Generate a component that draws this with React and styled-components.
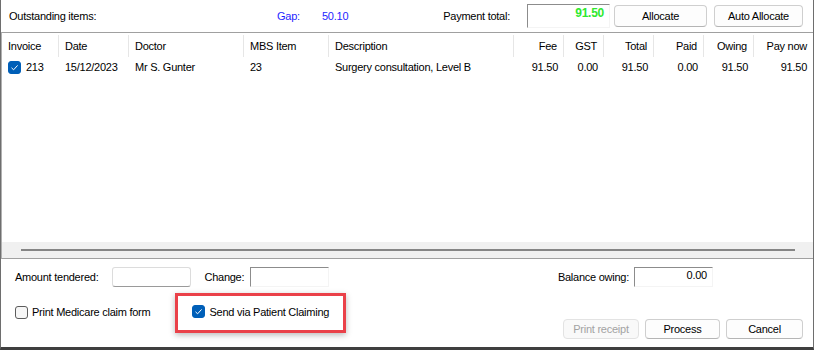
import React from "react";
import styled, { createGlobalStyle } from "styled-components";

const Global = createGlobalStyle`
  html, body { margin: 0; padding: 0; background: #ffffff; }
  body {
    font-family: "Liberation Sans", Arial, sans-serif;
    font-size: 11px;
    letter-spacing: -0.25px;
    color: #000;
  }
  * { box-sizing: border-box; }
`;

const Window = styled.div`
  width: 814px;
  height: 350px;
  border-left: 1px solid #6e6e6e;
  border-right: 1px solid #6e6e6e;
  border-bottom: 3px solid #3f3f3f;
  display: flex;
  flex-direction: column;
  background: #fff;
`;

const TopBar = styled.div`
  height: 32px;
  display: flex;
  align-items: center;
  padding-left: 8px;
  padding-right: 10px;
`;

const Slot = styled.div`
  width: ${(p) => p.$w}px;
  flex: none;
  color: ${(p) => p.$color || "#000"};
  text-align: ${(p) => p.$align || "left"};
  font-weight: ${(p) => (p.$bold ? 700 : 400)};
`;

const Field = styled.div`
  width: ${(p) => p.$w}px;
  height: ${(p) => p.$h || 20}px;
  flex: none;
  border-top: 1px solid #8c8c8c;
  border-left: 1px solid #8c8c8c;
  border-right: 1px solid #f4f4f4;
  border-bottom: 1px solid #f4f4f4;
  text-align: right;
  padding: 1px 5px 0 0;
  color: ${(p) => p.$color || "#000"};
  font-weight: ${(p) => (p.$bold ? 700 : 400)};
  font-size: ${(p) => p.$size || 11}px;
  align-self: ${(p) => p.$self || "auto"};
`;

const Input = styled.div`
  width: 79px;
  height: 20px;
  flex: none;
  border: 1px solid #dcdcdc;
  border-bottom-color: #9a9a9a;
  border-radius: 3px;
  background: #fff;
`;

const Button = styled.button`
  width: ${(p) => p.$w}px;
  height: ${(p) => p.$h || 20}px;
  flex: none;
  font-family: inherit;
  font-size: 11px;
  letter-spacing: -0.25px;
  color: ${(p) => (p.disabled ? "#a3a3a3" : "#000")};
  background: ${(p) => (p.disabled ? "#f9f9f9" : "#fdfdfd")};
  border: 1px solid ${(p) => (p.disabled ? "#e3e3e3" : "#cfcfcf")};
  border-bottom-color: ${(p) => (p.disabled ? "#e3e3e3" : "#b5b5b5")};
  border-radius: 4px;
  padding: 0;
  margin-left: ${(p) => p.$ml || 0}px;
`;

const Grid = styled.div`
  height: 227px;
  border-top: 1px solid #a0a0a0;
  border-bottom: 1px solid #a0a0a0;
  border-left: 1px solid #b0b0b0;
  display: flex;
  flex-direction: column;
`;

const Columns = "57px 70px 115px 85px 185px 50px 40px 50px 50px 50px 1fr";

const HeaderRow = styled.div`
  display: grid;
  grid-template-columns: ${Columns};
  height: 24px;
  padding-top: 2px;
`;

const HeaderCell = styled.div`
  display: flex;
  align-items: center;
  justify-content: ${(p) => (p.$right ? "flex-end" : "flex-start")};
  padding: 0 6px;
  border-right: ${(p) => (p.$last ? "none" : "1px solid #e6e6e6")};
`;

const DataRow = styled.div`
  display: grid;
  grid-template-columns: ${Columns};
  height: 20px;
`;

const Cell = styled.div`
  display: flex;
  align-items: center;
  gap: 5px;
  justify-content: ${(p) => (p.$right ? "flex-end" : "flex-start")};
  padding: ${(p) => (p.$right ? "0 6px 0 0" : "0 0 0 6px")};
  white-space: nowrap;
`;

const GridBody = styled.div`
  flex: 1;
`;

const HScroll = styled.div`
  height: 16px;
  background: #f0f0f0;
  display: flex;
  align-items: center;
  padding: 0 18px 0 19px;
`;

const Thumb = styled.div`
  flex: 1;
  height: 2px;
  background: #858585;
`;

const Bottom = styled.div`
  flex: 1;
  display: flex;
  flex-direction: column;
  padding: 8px 10px 8px 14px;
  gap: 6px;
`;

const Row = styled.div`
  display: flex;
  align-items: ${(p) => p.$align || "center"};
  height: ${(p) => p.$h}px;
`;

const Label = styled.span`
  margin-left: ${(p) => p.$ml || 0}px;
  margin-right: ${(p) => p.$mr || 0}px;
  flex: none;
`;

const Spacer = styled.div`
  flex: ${(p) => (p.$w ? `0 0 ${p.$w}px` : "1")};
`;

const CheckItem = styled.label`
  display: flex;
  align-items: center;
  gap: 4px;
  flex: none;
`;

const Box = styled.span`
  width: 13px;
  height: 13px;
  border-radius: 3px;
  flex: none;
  display: inline-flex;
  align-items: center;
  justify-content: center;
  background: ${(p) => (p.$checked ? "#005fb8" : "#f6f6f6")};
  border: 1px solid ${(p) => (p.$checked ? "#005fb8" : "#5c5c5c")};
`;

const Highlight = styled.div`
  margin-left: 25px;
  width: 171px;
  height: 40px;
  border: 3px solid #ea4149;
  box-shadow: 0 2px 6px rgba(0, 0, 0, 0.28);
  display: flex;
  align-items: center;
  padding-left: 14px;
  padding-bottom: 3px;
  align-self: flex-start;
`;

const ButtonRow = styled.div`
  display: flex;
  align-self: flex-end;
`;

function Tick() {
  return (
    <svg width="9" height="9" viewBox="0 0 9 9">
      <path d="M1.5 4.8 L3.6 6.8 L7.6 2.4" fill="none" stroke="#ffffff" strokeWidth="1" />
    </svg>
  );
}

function Check({ checked, children }) {
  return (
    <CheckItem>
      <Box $checked={checked}>{checked && <Tick />}</Box>
      {children}
    </CheckItem>
  );
}

const headers = [
  ["Invoice"], ["Date"], ["Doctor"], ["MBS Item"], ["Description"],
  ["Fee", true], ["GST", true], ["Total", true], ["Paid", true], ["Owing", true], ["Pay now", true],
];

const row = [
  ["15/12/2023"], ["Mr S. Gunter"], ["23"], ["Surgery consultation, Level B"],
  ["91.50", true], ["0.00", true], ["91.50", true], ["0.00", true], ["91.50", true], ["91.50", true],
];

export default function App() {
  return (
    <>
      <Global />
      <Window>
        <TopBar>
          <Slot $w={268}>Outstanding items:</Slot>
          <Slot $w={45} $color="#1f1fff">Gap:</Slot>
          <Slot $w={70} $color="#1f1fff">50.10</Slot>
          <Slot $w={118} $align="right">Payment total:</Slot>
          <Slot $w={17} />
          <Field $w={83} $h={24} $color="#2fe82f" $bold $size={12}>91.50</Field>
          <Button $w={93} $h={22} $ml={4}>Allocate</Button>
          <Button $w={89} $h={22} $ml={7}>Auto Allocate</Button>
        </TopBar>
        <Grid>
          <HeaderRow>
            {headers.map(([h, r], i) => (
              <HeaderCell key={h} $right={r} $last={i === headers.length - 1}>{h}</HeaderCell>
            ))}
          </HeaderRow>
          <DataRow>
            <Cell>
              <Box $checked><Tick /></Box>
              213
            </Cell>
            {row.map(([v, r], i) => (
              <Cell key={i} $right={r}>{v}</Cell>
            ))}
          </DataRow>
          <GridBody />
          <HScroll>
            <Thumb />
          </HScroll>
        </Grid>
        <Bottom>
          <Row $h={20}>
            <Label $mr={14}>Amount tendered:</Label>
            <Input />
            <Label $ml={13} $mr={6}>Change:</Label>
            <Field $w={79} $self="stretch" />
            <Spacer />
            <Label $mr={5}>Balance owing:</Label>
            <Field $w={79} $self="stretch">0.00</Field>
            <Spacer $w={90} />
          </Row>
          <Row $h={46} $align="stretch">
            <Row $h={38}>
              <Check>Print Medicare claim form</Check>
            </Row>
            <Highlight>
              <Check checked>Send via Patient Claiming</Check>
            </Highlight>
            <Spacer />
            <ButtonRow>
              <Button $w={76} disabled>Print receipt</Button>
              <Button $w={75} $ml={6}>Process</Button>
              <Button $w={77} $ml={6}>Cancel</Button>
            </ButtonRow>
          </Row>
        </Bottom>
      </Window>
    </>
  );
}
